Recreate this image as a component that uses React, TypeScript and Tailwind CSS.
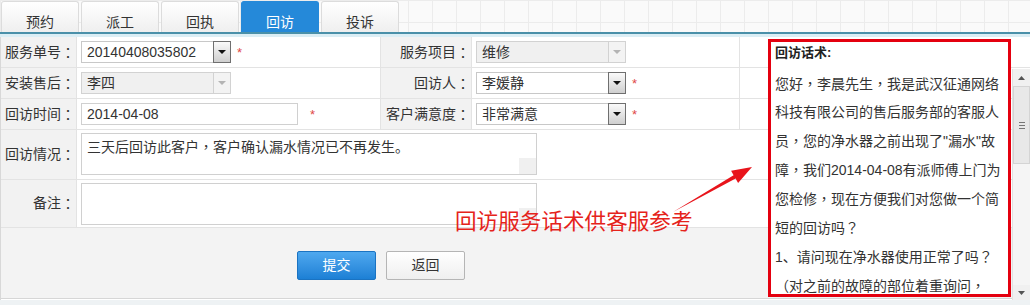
import React from "react";

const tabs = ["预约", "派工", "回执", "回访", "投诉"];

const scriptLines = [
  "您好，李晨先生，我是武汉征通网络",
  "科技有限公司的售后服务部的客服人",
  "员，您的净水器之前出现了\"漏水\"故",
  "障，我们2014-04-08有派师傅上门为",
  "您检修，现在方便我们对您做一个简",
  "短的回访吗？",
  "1、请问现在净水器使用正常了吗？",
  "（对之前的故障的部位着重询问，",
];

// full-width punctuation centred in its box, as the original font draws it
const Txt = ({ s }: { s: string }) => (
  <>
    {s.split(/([，：？（])/).map((part, i) =>
      /^[，：？（]$/.test(part) ? (
        <span key={i} className="font-['Noto_Sans_CJK_TC',sans-serif]">
          {part}
        </span>
      ) : (
        <React.Fragment key={i}>{part}</React.Fragment>
      )
    )}
  </>
);

const Select = ({ value, disabled }: { value: string; disabled?: boolean }) => (
  <div
    className={
      disabled
        ? "flex h-[22px] w-[150px] border border-[#d2d2d2] bg-[#f0f0f0]"
        : "flex h-[22px] w-[150px] border border-[#c8c8c8] bg-white"
    }
  >
    <span className="flex-1 pl-[5px] text-[14px] leading-[20px] text-[#333]">{value}</span>
    <span
      className={
        disabled
          ? "flex w-[17px] items-center justify-center border-l border-[#d2d2d2] bg-[#f3f3f3]"
          : "-my-px -mr-px flex w-[18px] items-center justify-center border border-[#6f6f6f] bg-gradient-to-b from-[#fafafa] to-[#cfcfcf]"
      }
    >
      <svg width="8" height="4" viewBox="0 0 8 4">
        <path d="M0 0h8L4 4z" fill={disabled ? "#b4b4b4" : "#111"} />
      </svg>
    </span>
  </div>
);

const Star = () => <span className="ml-[6px] text-[13px] leading-none text-[#e04848]">*</span>;

const Label = ({ text }: { text: string }) => (
  <div className="flex items-center justify-end border-r border-[#e3e3e3] bg-[#f2f2f2] pr-[1px] text-[14px] text-[#333]">
    <Txt s={text} />
  </div>
);

const Cell = ({ children }: { children?: React.ReactNode }) => (
  <div className="flex items-center border-r border-[#e3e3e3] pl-[4px]">{children}</div>
);

const TextBox = ({ text }: { text?: string }) => (
  <div className="flex h-[42px] w-[456px] border border-[#d0d0d0] bg-white">
    <div className="flex-1 pl-[5px] pt-[2px] text-[14px] leading-[20px] text-[#333]">
      {text && <Txt s={text} />}
    </div>
    <div className="flex w-[17px] flex-col justify-end">
      <div className="h-[16px] bg-[#f0f0f0]" />
    </div>
  </div>
);

const Scrollbar = () => (
  <div className="mt-[1px] flex h-[231px] flex-col border-l border-[#e2e2e2] bg-[#f5f5f5]">
    <div className="flex h-[17px] items-center justify-center bg-[#f0f0f0]">
      <svg width="7" height="4" viewBox="0 0 7 4">
        <path d="M0 4h7L3.5 0z" fill="#555" />
      </svg>
    </div>
    <div className="flex h-[78px] items-center justify-center border border-[#d4d4d4] bg-[#e8e8e8]">
      <div className="flex w-[6px] flex-col gap-[2px]">
        <div className="h-px bg-[#777]" />
        <div className="h-px bg-[#777]" />
        <div className="h-px bg-[#777]" />
      </div>
    </div>
    <div className="flex-1" />
    <div className="flex h-[15px] items-center justify-center bg-[#f0f0f0]">
      <svg width="7" height="4" viewBox="0 0 7 4">
        <path d="M0 0h7L3.5 4z" fill="#555" />
      </svg>
    </div>
  </div>
);

export default function App() {
  return (
    <div className="relative h-[305px] w-[1030px] overflow-hidden bg-[#eef2f4] font-['Liberation_Sans','Noto_Sans_CJK_SC',sans-serif] text-[#333]">
      {/* tab bar */}
      <div className="flex h-[32px] gap-[2px] bg-[#fafafa] bg-[linear-gradient(90deg,#ececec_1px,transparent_1px),linear-gradient(#ececec_1px,transparent_1px)] bg-[size:24px_22px] pl-[1px] pt-[1px]">
        {tabs.map((t) => (
          <div
            key={t}
            className={
              t === "回访"
                ? "h-[31px] w-[78px] rounded-t-[3px] border border-b-0 border-[#2589d9] bg-[#2589d9] pt-[12px] text-center text-[14px] leading-[16px] text-white"
                : "h-[31px] w-[78px] rounded-t-[3px] border border-b-0 border-[#dcdcdc] bg-gradient-to-b from-white to-[#efefef] pt-[12px] text-center text-[14px] leading-[16px] text-[#333]"
            }
          >
            {t}
          </div>
        ))}
      </div>
      <div className="h-[2px] bg-[#4a90a9]" />
      <div className="h-[3px] bg-[#dbeef5]" />

      <div className="flex">
        <div className="w-[1012px] border-l border-[#d8d8d8] bg-white">
          <div className="grid h-[31px] grid-cols-[76px_304px_91px_268px_1fr] border-b border-[#e3e3e3]">
            <Label text="服务单号：" />
            <Cell>
              <Select value="20140408035802" />
              <Star />
            </Cell>
            <Label text="服务项目：" />
            <Cell>
              <Select value="维修" disabled />
            </Cell>
            <div />
          </div>
          <div className="grid h-[31px] grid-cols-[76px_304px_91px_268px_1fr] border-b border-[#e3e3e3]">
            <Label text="安装售后：" />
            <Cell>
              <Select value="李四" disabled />
            </Cell>
            <Label text="回访人：" />
            <Cell>
              <Select value="李媛静" />
              <Star />
            </Cell>
            <div />
          </div>
          <div className="grid h-[31px] grid-cols-[76px_304px_91px_268px_1fr] border-b border-[#e3e3e3]">
            <Label text="回访时间：" />
            <Cell>
              <div className="h-[22px] w-[217px] border border-[#d0d0d0] pl-[5px] text-[14px] leading-[20px]">
                2014-04-08
              </div>
              <span className="ml-[6px]">
                <Star />
              </span>
            </Cell>
            <Label text="客户满意度：" />
            <Cell>
              <Select value="非常满意" />
              <Star />
            </Cell>
            <div />
          </div>
          <div className="grid h-[50px] grid-cols-[76px_1fr] border-b border-[#e3e3e3]">
            <Label text="回访情况：" />
            <div className="flex items-start pl-[4px] pt-[3px]">
              <TextBox text="三天后回访此客户，客户确认漏水情况已不再发生。" />
            </div>
          </div>
          <div className="grid h-[48px] grid-cols-[76px_1fr] border-b border-[#e3e3e3]">
            <Label text="备注：" />
            <div className="flex items-start pl-[4px] pt-[3px]">
              <TextBox />
            </div>
          </div>
          <div className="flex h-[71px] gap-[10px] border-b border-[#d6d6d6] bg-[#f3f3f3] pl-[296px] pt-[23px]">
            <button className="h-[29px] w-[79px] rounded-[2px] border border-[#1a73c2] bg-gradient-to-b from-[#4ea8ef] to-[#1c80d5] text-[14px] text-white">
              提交
            </button>
            <button className="h-[29px] w-[79px] rounded-[2px] border border-[#b5b5b5] bg-gradient-to-b from-white to-[#efefef] text-[14px] text-[#333]">
              返回
            </button>
          </div>
        </div>
        <div className="flex w-[18px] flex-col bg-white">
          <div className="h-[31px] border-b border-[#e3e3e3]" />
          <Scrollbar />
        </div>
      </div>

      {/* script panel, marked with red frame */}
      <div className="absolute left-[768px] top-[39px] h-[258px] w-[243px] overflow-hidden border-[3px] border-[#e4000f] bg-white pl-[4px]">
        <div className="text-[13px] font-bold leading-[22px] text-[#222]">回访话术:</div>
        <div className="mt-[5px] whitespace-nowrap text-[14px] leading-[28px] text-[#333]">
          {scriptLines.map((l) => (
            <div key={l}>
              <Txt s={l} />
            </div>
          ))}
        </div>
      </div>

      {/* annotation */}
      <svg className="absolute left-[660px] top-[160px]" width="100" height="60" viewBox="0 0 100 60">
        <polygon points="13,52 73.6,15.2 71.1,10.8 92,7 78.1,23 75.6,18.6" fill="#e8141b" />
      </svg>
      <div className="absolute left-[455px] top-[208px] text-[21.6px] leading-[28px] text-[#e5231b]">
        回访服务话术供客服参考
      </div>
    </div>
  );
}
